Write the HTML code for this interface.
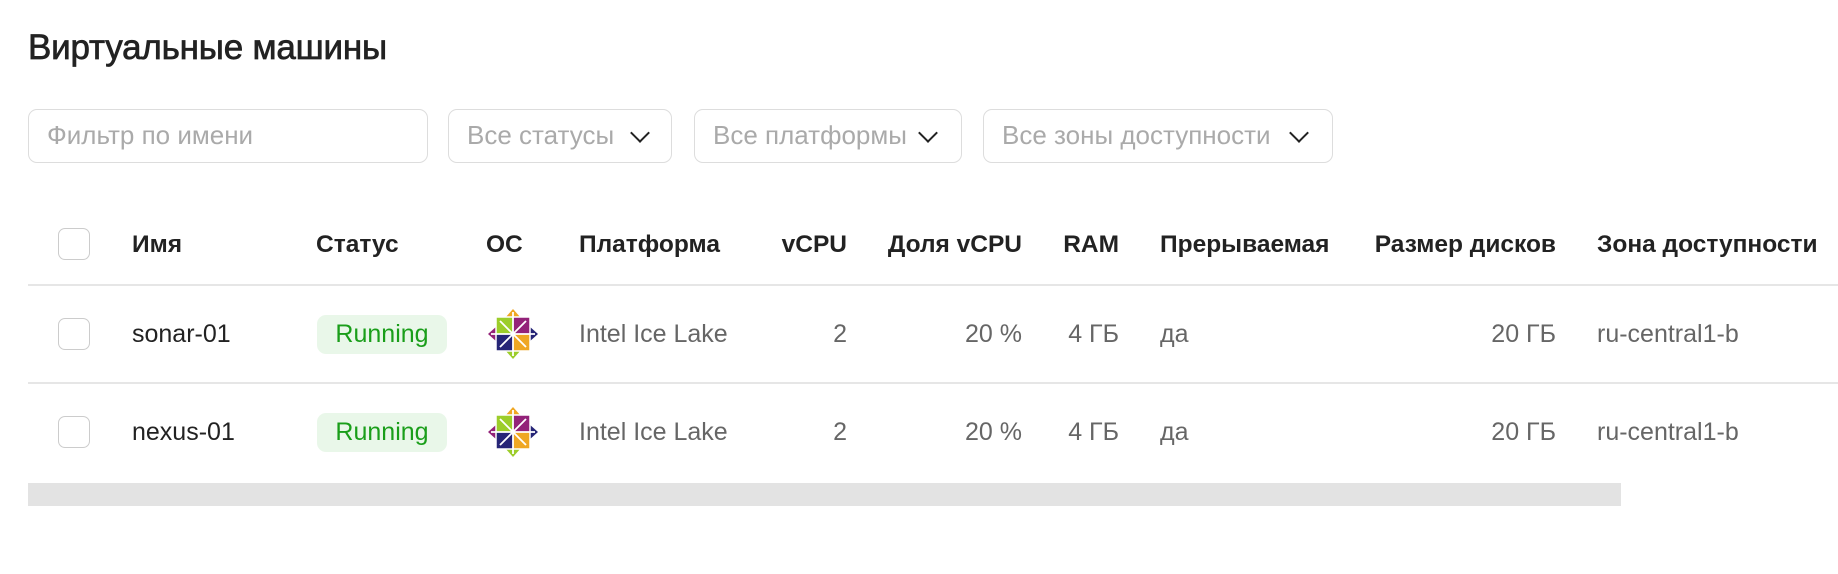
<!DOCTYPE html>
<html><head><meta charset="utf-8"><style>
*{box-sizing:border-box;margin:0;padding:0}
body{width:1838px;height:574px;background:#fff;font-family:"Liberation Sans","DejaVu Sans",sans-serif;position:relative;overflow:hidden;color:#222}
.abs{position:absolute}
h1{position:absolute;left:28px;top:28px;font-size:35px;font-weight:normal;-webkit-text-stroke:0.7px #222;color:#222;letter-spacing:-0.2px;white-space:nowrap}
.box{position:absolute;top:109px;height:54px;border:1.5px solid #ddd;border-radius:9px;font-size:26px;color:#aaa;line-height:51px;padding-left:18px;white-space:nowrap}
.chev{position:absolute;top:16px;width:14px;height:14px;border-right:2px solid #222;border-bottom:2px solid #222;transform:rotate(45deg)}
.t{position:absolute;font-size:25px;line-height:28px;white-space:nowrap}
.h{font-weight:bold;font-size:24.5px;color:#222;top:231px}
.line{position:absolute;left:28px;width:1810px;height:2px;background:#e6e6e6}
.cb{position:absolute;left:58px;width:32px;height:32px;border:1.5px solid #ccc;border-radius:7px}
.r{text-align:right}
.g{color:#666}
.badge{position:absolute;left:317px;width:130px;height:39px;border-radius:9px;background:#e9f7e9;color:#1a9e1a;font-size:25px;line-height:39px;text-align:center}
</style></head><body>
<h1>Виртуальные машины</h1>
<div class="box" style="left:28px;width:400px">Фильтр по имени</div>
<div class="box" style="left:448px;width:224px">Все статусы<div class="chev" style="left:184px"></div></div>
<div class="box" style="left:694px;width:268px">Все платформы<div class="chev" style="left:226px"></div></div>
<div class="box" style="left:983px;width:350px">Все зоны доступности<div class="chev" style="left:308px"></div></div>

<div class="cb" style="top:228px"></div>
<div class="t h" style="left:132px">Имя</div>
<div class="t h" style="left:316px">Статус</div>
<div class="t h" style="left:486px">ОС</div>
<div class="t h" style="left:579px">Платформа</div>
<div class="t h r" style="left:747px;width:100px">vCPU</div>
<div class="t h r" style="left:862px;width:160px">Доля vCPU</div>
<div class="t h r" style="left:1019px;width:100px">RAM</div>
<div class="t h" style="left:1160px">Прерываемая</div>
<div class="t h r" style="left:1336px;width:220px">Размер дисков</div>
<div class="t h" style="left:1597px">Зона доступности</div>
<div class="line" style="top:284px"></div>

<svg width="0" height="0" style="position:absolute"><defs>
<g id="c">
<polygon points="25,0 33,9 33,17 17,17 17,9" fill="#efa724"/>
<polygon points="50,25 41,33 33,33 33,17 41,17" fill="#262577"/>
<polygon points="25,50 17,41 17,33 33,33 33,41" fill="#9ccd2a"/>
<polygon points="0,25 9,17 17,17 17,33 9,33" fill="#932279"/>
<rect x="8" y="8" width="17" height="17" fill="#9ccd2a"/>
<rect x="25" y="8" width="17" height="17" fill="#932279"/>
<rect x="8" y="25" width="17" height="17" fill="#262577"/>
<rect x="25" y="25" width="17" height="17" fill="#efa724"/>
<path d="M25,3V47M3,25H47M12,12L38,38M38,12L12,38" stroke="#fff" stroke-width="1.8"/>
<rect x="8" y="8" width="34" height="34" fill="none" stroke="#fff" stroke-width="1.5"/>
</g></defs></svg>

<div class="cb" style="top:318px"></div>
<div class="t" style="left:132px;top:320px">sonar-01</div>
<div class="badge" style="top:315px">Running</div>
<svg class="abs" style="left:488px;top:309px" width="50" height="50"><use href="#c"/></svg>
<div class="t g" style="left:579px;top:320px">Intel Ice Lake</div>
<div class="t g r" style="left:747px;width:100px;top:320px">2</div>
<div class="t g r" style="left:862px;width:160px;top:320px">20 %</div>
<div class="t g r" style="left:1019px;width:100px;top:320px">4 ГБ</div>
<div class="t g" style="left:1160px;top:320px">да</div>
<div class="t g r" style="left:1356px;width:200px;top:320px">20 ГБ</div>
<div class="t g" style="left:1597px;top:320px">ru-central1-b</div>
<div class="line" style="top:382px"></div>

<div class="cb" style="top:416px"></div>
<div class="t" style="left:132px;top:418px">nexus-01</div>
<div class="badge" style="top:413px">Running</div>
<svg class="abs" style="left:488px;top:407px" width="50" height="50"><use href="#c"/></svg>
<div class="t g" style="left:579px;top:418px">Intel Ice Lake</div>
<div class="t g r" style="left:747px;width:100px;top:418px">2</div>
<div class="t g r" style="left:862px;width:160px;top:418px">20 %</div>
<div class="t g r" style="left:1019px;width:100px;top:418px">4 ГБ</div>
<div class="t g" style="left:1160px;top:418px">да</div>
<div class="t g r" style="left:1356px;width:200px;top:418px">20 ГБ</div>
<div class="t g" style="left:1597px;top:418px">ru-central1-b</div>

<div class="abs" style="left:28px;top:483px;width:1593px;height:23px;background:#e3e3e3"></div>
</body></html>
